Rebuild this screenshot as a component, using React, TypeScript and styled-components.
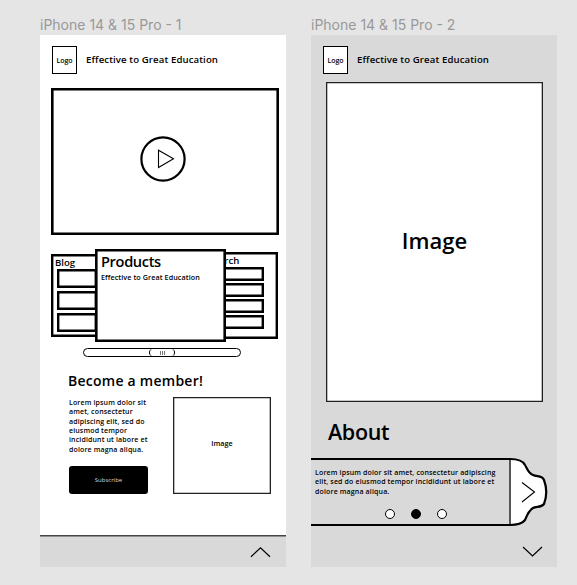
import React from "react";
import styled, { createGlobalStyle } from "styled-components";

const GlobalStyle = createGlobalStyle`
  * { box-sizing: border-box; }
  body { margin: 0; background: #e5e5e5; color: #000; font-family: "Open Sans", sans-serif; }
`;

const Canvas = styled.main`
  display: flex;
  gap: 25px;
  width: 577px;
  height: 585px;
  padding-left: 40px;
  overflow: hidden;
  background: #e5e5e5;
`;

const Artboard = styled.section`
  width: 246px;
  flex: none;
`;

const ArtboardName = styled.div`
  height: 35px;
  padding-top: 17px;
  font: 400 14px/16px Inter, sans-serif;
  color: #999;
  white-space: nowrap;
`;

const Phone = styled.div<{ $fill: string }>`
  display: flex;
  flex-direction: column;
  height: 532px;
  background: ${(p) => p.$fill};
`;

const Text = styled.span<{ $size: number; $spacing?: number; $weight?: number; $line?: number }>`
  display: block;
  font-size: ${(p) => p.$size}px;
  font-weight: ${(p) => p.$weight ?? 600};
  letter-spacing: ${(p) => p.$spacing ?? 0}px;
  line-height: ${(p) => p.$line ?? Math.round(p.$size * 1.35)}px;
  white-space: nowrap;
`;

const Header = styled.header`
  display: flex;
  align-items: center;
  gap: 9px;
  height: 28px;
  margin: 11px 0 0 12px;
  padding-bottom: 1px;
`;

const Logo = styled.div`
  display: flex;
  align-items: center;
  justify-content: center;
  width: 25px;
  height: 28px;
  margin-bottom: -1px;
  border: 1px solid #000;
  background: #fff;
`;

const Video = styled.div`
  display: flex;
  align-items: center;
  justify-content: center;
  width: 228px;
  height: 147px;
  margin: 14px 0 0 11px;
  box-shadow: inset 0 0 0 2.6px #000;
  padding: 0 5px 6px 0;
`;

const Carousel = styled.div`
  display: flex;
  align-items: center;
  height: 93px;
  margin: 14px 0 0 11px;
`;

const SideCard = styled.div<{ $width: number; $height: number; $side: "left" | "right" }>`
  flex: none;
  width: ${(p) => p.$width}px;
  height: ${(p) => p.$height}px;
  padding: 2px;
  box-shadow: inset 0 0 0 2.4px #000;
  ${(p) => (p.$side === "left" ? "margin-right: -4px; padding-left: 6px;" : "margin-left: -21px; padding-right: 14px;")}
`;

const CardTitle = styled.div<{ $shift: number }>`
  margin-left: ${(p) => p.$shift}px;
`;

const MainCard = styled.div`
  z-index: 1;
  flex: none;
  width: 131px;
  height: 93px;
  padding: 3px 0 0 6px;
  box-shadow: inset 0 0 0 2.6px #000;
  background: #fff;
`;

const Slots = styled.div<{ $gap: number }>`
  display: grid;
  gap: ${(p) => p.$gap}px;
`;

const Slot = styled.div<{ $height: number }>`
  height: ${(p) => p.$height}px;
  box-shadow: inset 0 0 0 2.4px #000;
`;

const Track = styled.div`
  display: flex;
  justify-content: center;
  width: 158px;
  height: 9px;
  margin: 6px 0 0 43px;
  border: 1px solid #000;
  border-radius: 5px;
`;

const Thumb = styled.div`
  display: flex;
  align-items: center;
  justify-content: center;
  gap: 1px;
  width: 26px;
  height: 7px;
  border: solid #000;
  border-width: 0 1px;
  border-radius: 4px;
`;

const Grip = styled.i`
  width: 1px;
  height: 4px;
  background: #777;
`;

const Membership = styled.div`
  display: grid;
  grid-template-columns: 104px 98px;
  margin: 6px 0 0 29px;
`;

const Copy = styled.div`
  padding-top: 1px;
`;

const Subscribe = styled.button`
  display: flex;
  align-items: center;
  justify-content: center;
  width: 79px;
  height: 28px;
  margin-top: 12px;
  padding: 0;
  border: 0;
  border-radius: 3px;
  background: #000;
  color: #ddd;
  font-family: inherit;
`;

const Picture = styled.div<{ $width: number; $height: number; $lift?: number }>`
  display: flex;
  align-items: center;
  justify-content: center;
  width: ${(p) => p.$width}px;
  height: ${(p) => p.$height}px;
  padding-bottom: ${(p) => p.$lift ?? 0}px;
  box-shadow: inset 0 0 0 1.3px #222;
  background: #fff;
`;

const HeroSlot = styled.div`
  margin: 8px 0 0 15px;
`;

const Footer = styled.footer<{ $line?: boolean }>`
  display: flex;
  justify-content: flex-end;
  height: 32px;
  margin-top: auto;
  padding: ${(p) => (p.$line ? "12px 16px 0 0" : "12px 15px 0 0")};
  box-shadow: ${(p) => (p.$line ? "inset 0 1.6px #444" : "none")};
  background: #d9d9d9;
`;

const Heading = styled.div<{ $top: number; $left: number }>`
  margin: ${(p) => p.$top}px 0 0 ${(p) => p.$left}px;
`;

const About = styled.div`
  display: flex;
  height: 68px;
  margin-top: 11px;
`;

const AboutBody = styled.div`
  display: flex;
  flex-direction: column;
  flex: none;
  width: 197px;
  height: 68px;
  padding: 8px 0 0 4px;
  border: solid #000;
  border-width: 2px 0;
`;

const Dots = styled.div`
  display: flex;
  gap: 16px;
  margin: 13px 0 0 70px;
`;

const Dot = styled.i<{ $active?: boolean }>`
  width: 10px;
  height: 10px;
  border: 1px solid #000;
  border-radius: 50%;
  background: ${(p) => (p.$active ? "#000" : "#fff")};
`;

const Icon = styled.svg`
  display: block;
  flex: none;
  fill: none;
  stroke: #000;
  overflow: visible;
`;

function PageHeader() {
  return (
    <Header>
      <Logo><Text $size={7} $spacing={-0.05}>Logo</Text></Logo>
      <Text $size={9.6} $spacing={0.11}>Effective to Great Education</Text>
    </Header>
  );
}

const memberCopy = [
  "Lorem ipsum dolor sit",
  "amet, consectetur",
  "adipiscing elit, sed do",
  "eiusmod tempor",
  "incididunt ut labore et",
  "dolore magna aliqua.",
];

const aboutCopy = [
  "Lorem ipsum dolor sit amet, consectetur adipiscing",
  "elit, sed do eiusmod tempor incididunt ut labore et",
  "dolore magna aliqua.",
];

export default function App() {
  return (
    <>
      <GlobalStyle />
      <Canvas>
        <Artboard>
          <ArtboardName>iPhone 14 &amp; 15 Pro - 1</ArtboardName>
          <Phone $fill="#fff">
            <PageHeader />
            <Video>
              <Icon width="46" height="46">
                <circle cx="23" cy="23" r="21.6" strokeWidth="2.2" />
                <path d="M18.5 14.2V31.5L33.5 22.8Z" strokeWidth="1.1" />
              </Icon>
            </Video>
            <Carousel>
              <SideCard $side="left" $width={48} $height={83}>
                <CardTitle $shift={-2}><Text $size={9.6} $line={13}>Blog</Text></CardTitle>
                <Slots $gap={3}>
                  {[0, 1, 2].map((i) => <Slot key={i} $height={19} />)}
                </Slots>
              </SideCard>
              <MainCard>
                <Text $size={14.6} $line={19} $spacing={-0.35}>Products</Text>
                <Text $size={7.2} $line={13} $spacing={0.08}>Effective to Great Education</Text>
              </MainCard>
              <SideCard $side="right" $width={73} $height={87}>
                <CardTitle $shift={1}><Text $size={9.6} $line={13}>Search</Text></CardTitle>
                <Slots $gap={2}>
                  {[0, 1, 2, 3].map((i) => <Slot key={i} $height={14} />)}
                </Slots>
              </SideCard>
            </Carousel>
            <Track><Thumb><Grip /><Grip /><Grip /></Thumb></Track>
            <Heading $top={14} $left={28}>
              <Text $size={14} $line={20} $spacing={0.25}>Become a member!</Text>
            </Heading>
            <Membership>
              <Copy>
                {memberCopy.map((line) => <Text key={line} $size={7} $line={9.35} $spacing={0.14}>{line}</Text>)}
                <Subscribe><Text as="span" $size={6} $weight={400}>Subscribe</Text></Subscribe>
              </Copy>
              <Picture $width={98} $height={97} $lift={5}><Text $size={7.2}>Image</Text></Picture>
            </Membership>
            <Footer $line>
              <Icon width="19" height="10"><path d="M0 9.7L9.5 .8L19 9.7" strokeWidth="1.2" /></Icon>
            </Footer>
          </Phone>
        </Artboard>
        <Artboard>
          <ArtboardName>iPhone 14 &amp; 15 Pro - 2</ArtboardName>
          <Phone $fill="#d9d9d9">
            <PageHeader />
            <HeroSlot>
              <Picture $width={217} $height={320} $lift={4}><Text $size={22}>Image</Text></Picture>
            </HeroSlot>
            <Heading $top={15} $left={17}>
              <Text $size={21.5} $line={30} $spacing={-0.35}>About</Text>
            </Heading>
            <About>
              <AboutBody>
                {aboutCopy.map((line) => <Text key={line} $size={7} $line={9.35} $spacing={0.15}>{line}</Text>)}
                <Dots><Dot /><Dot $active /><Dot /></Dots>
              </AboutBody>
              <Icon width="42" height="68" viewBox="0 0 42 68">
                <path d="M2 1C9 1 15 3 17 7C19 10 20 15 25 17C29 19 34 17 36 22C39 30 39 38 36 46C33 50 28 48 25 50C20 53 19 58 17 62C14 66 8 67 2 67Z" fill="#fff" stroke="none" />
                <path d="M0 1H2C9 1 15 3 17 7C19 10 20 15 25 17C29 19 34 17 36 22C39 30 39 38 36 46C33 50 28 48 25 50C20 53 19 58 17 62C14 66 8 67 2 67H0" strokeWidth="2.2" />
                <path d="M2 2V66" stroke="#555" strokeWidth="2" />
                <path d="M14 24.5L26.5 34L14 44" strokeWidth="1.1" />
              </Icon>
            </About>
            <Footer>
              <Icon width="19" height="10"><path d="M0 0L9.5 9L19 0" strokeWidth="1.2" /></Icon>
            </Footer>
          </Phone>
        </Artboard>
      </Canvas>
    </>
  );
}
